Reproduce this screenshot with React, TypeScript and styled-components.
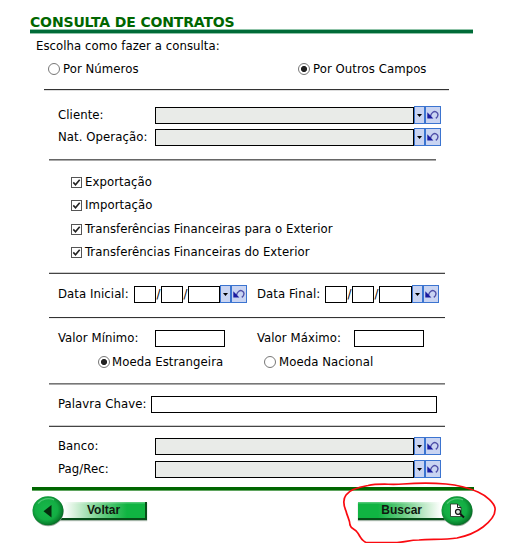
import React from 'react';
import styled, { createGlobalStyle } from 'styled-components';

const GlobalStyle = createGlobalStyle`
  body { margin: 0; background: #fff; }
  * { box-sizing: border-box; }
`;

const Page = styled.main`
  position: relative;
  width: 508px;
  height: 543px;
  overflow: hidden;
  background: #fff;
  color: #000;
  font: 13px/18px "DejaVu Sans Condensed", "DejaVu Sans", Tahoma, sans-serif;
  font-stretch: condensed;
`;

const Title = styled.h1`
  margin: 0 0 0 30px;
  padding-top: 13px;
  height: 29px;
  color: #006600;
  font: bold 14px/18px "DejaVu Sans", Verdana, sans-serif;
  font-stretch: normal;
  letter-spacing: -0.15px;
  white-space: nowrap;
`;

const TitleRule = styled.div`
  width: 443px;
  height: 5px;
  margin-left: 30px;
  background: #006b38;
  border: solid #8fc3a8;
  border-width: 1px 0;
`;

const Intro = styled.p`
  margin: 3px 0 0 36px;
  height: 18px;
  letter-spacing: 0.06px;
`;

const Row = styled.div<{ $top: number; $cols: string }>`
  display: grid;
  grid-template-columns: ${(p) => p.$cols};
  align-items: center;
  height: 18px;
  margin-top: ${(p) => p.$top}px;
`;

const Text = styled.span`
  white-space: nowrap;
  letter-spacing: 0.07px;
`;

const Rule = styled.div<{ $top: number; $left?: number; $width?: number; $a: string; $b: string }>`
  width: ${(p) => p.$width ?? 396}px;
  height: 2px;
  margin: ${(p) => p.$top}px 0 0 ${(p) => p.$left ?? 49}px;
  border: solid;
  border-width: 1px 0;
  border-color: ${(p) => p.$a} transparent ${(p) => p.$b};
`;

const Field = styled.div<{ $filled?: boolean }>`
  height: 17px;
  align-self: end;
  border: 1px solid #000;
  background: ${(p) => (p.$filled ? '#e9ebe8' : '#fff')};
`;

const Slash = styled.span`
  text-align: center;
`;

const IconPair = styled.div`
  display: grid;
  grid-template-columns: 11px 16px;
  height: 18px;
`;

const IconCell = styled.span`
  display: flex;
  align-items: center;
  justify-content: center;
  border: 1px solid #3b74d0;
  background: #c9d4f2;
`;

const RadioDot = styled.span<{ $on?: boolean }>`
  width: 12px;
  height: 12px;
  border: 1px solid #777;
  border-radius: 50%;
  background: ${(p) => (p.$on ? 'radial-gradient(circle, #222 2.7px, #fff 3.4px)' : '#fff')};
`;

const CheckBox = styled.span`
  display: flex;
  width: 11px;
  height: 11px;
  border: 1px solid #555;
`;

const GreenRule = styled.div`
  width: 442px;
  height: 4px;
  margin: 9px 0 0 32px;
  background: #006600;
  border-bottom: 1px solid #5fa45f;
`;

const Actions = styled.div`
  display: flex;
  justify-content: space-between;
  width: 441px;
  margin: 4px 0 0 32px;
`;

const ActionButton = styled.button<{ $end?: boolean }>`
  display: flex;
  flex-direction: ${(p) => (p.$end ? 'row-reverse' : 'row')};
  align-items: center;
  padding: 0;
  border: 0;
  background: none;
`;

const ActionIcon = styled.svg`
  position: relative;
  z-index: 1;
  width: 32px;
  height: 32px;
`;

const ActionLabel = styled.span<{ $end?: boolean }>`
  width: 92px;
  height: 18px;
  margin: ${(p) => (p.$end ? '0 -9px 0 0' : '0 0 0 -9px')};
  padding-${(p) => (p.$end ? 'right' : 'left')}: ${(p) => (p.$end ? 28 : 32)}px;
  text-align: ${(p) => (p.$end ? 'right' : 'left')};
  color: #101810;
  font: bold 12px/16px "Liberation Sans", Arial, sans-serif;
  border: solid #064d18;
  border-width: ${(p) => (p.$end ? '0 0 2px 0' : '0 2px 2px 0')};
  box-shadow: 0 1px 1px #a4b5a8;
  background: linear-gradient(rgba(255,255,255,.35), transparent 15%),
    linear-gradient(${(p) => (p.$end ? 'to left' : 'to right')}, #fff 9px, #d5f1da 20px, #65cb80 48px, #10b442 72px);
`;

const Annotation = styled.svg`
  position: absolute;
  inset: 0;
  pointer-events: none;
`;

const Icons = () => (
  <IconPair>
    <IconCell>
      <svg width="5" height="3" viewBox="0 0 5 3"><path d="M0 0H5L2.5 3Z" fill="#000" /></svg>
    </IconCell>
    <IconCell>
      <svg width="14" height="14" viewBox="0 0 14 14" fill="none">
        <path d="M4.5 8C5.5 4.5 8 3 10 3.8C12.8 5 12.6 8.4 9.8 10.4" stroke="#5050a8" strokeWidth="1.4" />
        <path d="M1.3 4.3V10.4H7.4Z" fill="#1b1ba0" />
      </svg>
    </IconCell>
  </IconPair>
);

const LookupRow = ({ label, top }: { label: string; top: number }) => (
  <Row $top={top} $cols="58px 97px 259px 27px">
    <span />
    <Text>{label}</Text>
    <Field $filled />
    <Icons />
  </Row>
);

const CheckRow = ({ label, top }: { label: string; top: number }) => (
  <Row $top={top} $cols="71px 14px auto">
    <span />
    <CheckBox>
      <svg width="9" height="9" viewBox="0 0 9 9"><path d="M1.3 4.4L3.5 6.7L7.7 1.7" fill="none" stroke="#222" strokeWidth="1.6" /></svg>
    </CheckBox>
    <Text>{label}</Text>
  </Row>
);

const DateFields = () => (
  <>
    <Field />
    <Slash>/</Slash>
    <Field />
    <Slash>/</Slash>
    <Field />
    <Icons />
  </>
);

const Disc = ({ id, children }: { id: string; children: React.ReactNode }) => (
  <ActionIcon viewBox="0 0 32 32">
    <defs>
      <radialGradient id={id} cx=".45" cy=".45" r=".6">
        <stop offset="0" stopColor="#16b94a" />
        <stop offset=".6" stopColor="#13ad43" />
        <stop offset=".82" stopColor="#0a8530" />
        <stop offset="1" stopColor="#045a1c" />
      </radialGradient>
    </defs>
    <ellipse cx="16.3" cy="16.8" rx="15.2" ry="14.4" fill="#9aa99d" />
    <ellipse cx="16" cy="15.8" rx="15.5" ry="14.5" fill={`url(#${id})`} />
    <path d="M6 8.5C10 3.5 17 2.4 22 4.8" fill="none" stroke="#78d994" strokeWidth="1.3" opacity=".6" />
    {children}
  </ActionIcon>
);

export default function App() {
  return (
    <Page>
      <GlobalStyle />
      <Title>CONSULTA DE CONTRATOS</Title>
      <TitleRule />
      <Intro>Escolha como fazer a consulta:</Intro>
      <Row $top={5} $cols="48px 15px 235px 15px auto">
        <span /><RadioDot /><Text>Por Números</Text><RadioDot $on /><Text>Por Outros Campos</Text>
      </Row>
      <Rule $top={11} $left={44} $width={405} $a="#333" $b="#ddd" />

      <LookupRow top={15} label="Cliente:" />
      <LookupRow top={4} label="Nat. Operação:" />
      <Rule $top={13} $width={387} $a="#666" $b="#aaa" />

      <CheckRow top={12} label="Exportação" />
      <CheckRow top={5} label="Importação" />
      <CheckRow top={6} label="Transferências Financeiras para o Exterior" />
      <CheckRow top={5} label="Transferências Financeiras do Exterior" />
      <Rule $top={11} $a="#ccc" $b="#444" />

      <Row $top={11} $cols="58px 76px 22px 5px 22px 5px 32px 27px 10px 68px 22px 5px 22px 5px 33px 27px">
        <span /><Text>Data Inicial:</Text><DateFields />
        <span /><Text>Data Final:</Text><DateFields />
      </Row>
      <Rule $top={14} $a="#333" $b="#eee" />

      <Row $top={10} $cols="58px 97px 70px 32px 97px 70px">
        <span /><Text>Valor Mínimo:</Text><Field /><span /><Text>Valor Máximo:</Text><Field />
      </Row>
      <Row $top={6} $cols="98px 14px 152px 15px auto">
        <span /><RadioDot $on /><Text>Moeda Estrangeira</Text><RadioDot /><Text>Moeda Nacional</Text>
      </Row>
      <Rule $top={12} $a="#777" $b="#aaa" />

      <Row $top={10} $cols="58px 93px 286px">
        <span /><Text>Palavra Chave:</Text><Field />
      </Row>
      <Rule $top={12} $a="#ccc" $b="#444" />

      <LookupRow top={10} label="Banco:" />
      <LookupRow top={5} label="Pag/Rec:" />
      <GreenRule />

      <Actions>
        <ActionButton>
          <Disc id="backDisc"><path d="M19.5 10V22.5L11.5 16.2Z" fill="#052b0d" /></Disc>
          <ActionLabel>Voltar</ActionLabel>
        </ActionButton>
        <ActionButton $end>
          <Disc id="searchDisc">
            <path d="M9.5 9H16.5L20 12.5V21.5H9.5Z" fill="#fff" stroke="#243024" strokeWidth=".8" />
            <path d="M16.5 9V12.5H20" fill="none" stroke="#222" />
            <circle cx="17" cy="16.8" r="2.5" fill="#dfe8df" stroke="#111" strokeWidth="1.2" />
            <path d="M19 18.8L23 22.5" stroke="#111" strokeWidth="2" />
          </Disc>
          <ActionLabel $end>Buscar</ActionLabel>
        </ActionButton>
      </Actions>

      <Annotation width="508" height="543" viewBox="0 0 508 543">
        <path
          d="M366 542.5C360 540 360 535 357 532C355 529 351 529 350 525C350 520 347 516 346 511C343 504 343 499 346 495C350 489 359 487 368 485.5C379 483 390 485 403 484C416 483 435 483 446 484C459 485 469 488 478 492C487 496 494 503 495 508C496 515 491 521 483 527C475 533 467 536 457 538C444 540 431 539 419 540C410 540 405 542 397 542.5H366"
          fill="none" stroke="#fa0a10" strokeWidth="1.7" strokeLinejoin="round"
        />
      </Annotation>
    </Page>
  );
}
